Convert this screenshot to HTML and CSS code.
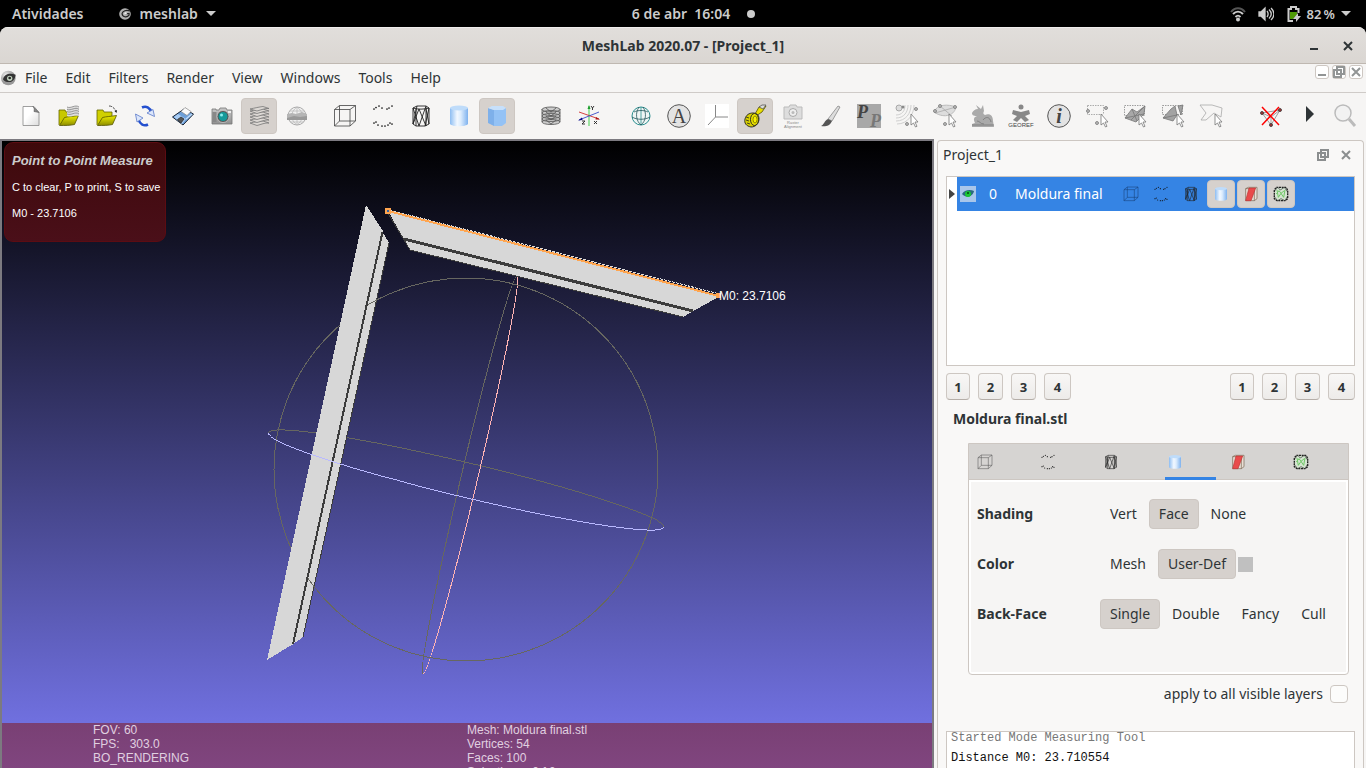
FILE: index.html
```html
<!DOCTYPE html>
<html lang="pt">
<head>
<meta charset="utf-8">
<title>MeshLab 2020.07 - [Project_1]</title>
<link rel="stylesheet" href="styles.css">
</head>
<body>
<svg class="defs" aria-hidden="true">
  <defs>
    <linearGradient id="g-cyl"><stop offset="0" stop-color="#8dbdf2"/><stop offset=".4" stop-color="#f2f8ff"/><stop offset=".6" stop-color="#dcecfd"/><stop offset="1" stop-color="#7fb2ee"/></linearGradient>
    <linearGradient id="g-page" x2="1" y2="1"><stop offset=".4" stop-color="#fff"/><stop offset="1" stop-color="#dcdcdc"/></linearGradient>
    <linearGradient id="g-folder" y2="1" x2="0"><stop offset="0" stop-color="#f0f000"/><stop offset="1" stop-color="#8c8c00"/></linearGradient>
    <linearGradient id="g-cam" y2="1" x2="0"><stop offset="0" stop-color="#c8c8c8"/><stop offset="1" stop-color="#909090"/></linearGradient>
    <radialGradient id="g-ball" cx=".35" cy=".3"><stop offset="0" stop-color="#eee"/><stop offset="1" stop-color="#999"/></radialGradient>
    <symbol id="cursor" viewBox="0 0 24 24"><path d="M16 10v11l2.500-2 2 4 1.500-.700-2-4.300h3z" fill="#fff" stroke="#777" stroke-width=".8"/></symbol>
    <symbol id="logo" viewBox="0 0 24 24"><circle cx="11" cy="12" r="11" fill="url(#g-ball)"/><path d="M3 14c2-8 10-10 19-7-1 8-6 12-12 11-4 0-6-2-7-4z" fill="#333"/><circle cx="13" cy="12.500" r="4" fill="#bfcfbc"/><circle cx="13" cy="12" r="2" fill="#222"/></symbol>
    <symbol id="logo-mono" viewBox="0 0 24 24"><circle cx="12" cy="12" r="10" fill="#b0b0b0"/><path d="M21 7c-7-3-13 0-14 4 0 6 8 8 12 3v-3l-7 1" fill="none" stroke="#222" stroke-width="2"/><circle cx="13" cy="11" r="2" fill="#eee"/></symbol>
    <symbol id="new" viewBox="0 0 24 24"><path d="M4 2.500h11l5 6v13H4z" fill="url(#g-page)" stroke="#888" stroke-width=".8"/><path d="M14 2.500c2 2 1 4 1 5l5 1z" fill="#888" stroke="#555" stroke-width=".6"/></symbol>
    <symbol id="folder-layers" viewBox="0 0 24 24"><path d="M2 21V6h6l1 2h9v4" fill="#c8c800" stroke="#666600" stroke-width=".8"/><path d="M2.500 21.500l5-8c4-1 8-1 14-2l-4 9c-4 1-10 1-15 1z" fill="url(#g-folder)" stroke="#555500" stroke-width=".8"/><path d="M10 3c4 2 8-3 12 0v9c-4-2-8 2-12 0z" fill="#ddd"/><path d="M10 3c4 2 8-3 12 0M10 5.300c4 2 8-3 12 0M10 7.600c4 2 8-3 12 0M10 10c4 2 8-3 12 0" fill="none" stroke="#777" stroke-width=".7"/></symbol>
    <symbol id="folder" viewBox="0 0 24 24"><path d="M2 21V6h6l1 2h8v4" fill="#d0d000" stroke="#666600" stroke-width=".8"/><path d="M2.500 21.500l5-8c4-1 8-1 14-2l-4 9c-4 1-10 1-15 1z" fill="url(#g-folder)" stroke="#555500" stroke-width=".8"/><path d="M14 2c4 0 6 3 7 6" fill="none" stroke="#555" stroke-dasharray="3 1"/><path d="M21.500 9l-2-2 2.500-1z" fill="#222"/></symbol>
    <symbol id="reload" viewBox="0 0 24 24"><path d="M9 3.500c4-2 8 0 9.500 5" fill="none" stroke="#2450cf" stroke-width="2.600"/><path d="M14 9l6-3.500 1.500 7z" fill="#dbe6fb" stroke="#5a78c8" stroke-width=".8"/><path d="M15 20.500c-4 2-8 0-9.500-5" fill="none" stroke="#2450cf" stroke-width="2.600"/><path d="M10 14l-6 4-1.500-8z" fill="#dbe6fb" stroke="#5a78c8" stroke-width=".8"/></symbol>
    <symbol id="save" viewBox="0 0 24 24"><path d="M1.500 13L13 5l9.500 5L12 21z" fill="#6d9fd8" stroke="#1a2433"/><path d="M3 13l4-3 8 5-4 5z" fill="#a9cdf5"/><path d="M10 7.500l4-4 6 4-4 4z" fill="#fafafa" stroke="#888" stroke-width=".7"/><path d="M6.500 15.500l3.500-2.500 3 2-3 4z" fill="#555" stroke="#222" stroke-width=".7"/><path d="M15 15l6-5" stroke="#bfdcfa" stroke-width="1.500"/></symbol>
    <symbol id="camera" viewBox="0 0 24 24"><path d="M3 5h4v1h3l1-2h6l1 2h5v14H3z" fill="url(#g-cam)" stroke="#777" stroke-width=".8"/><path d="M3.500 8h4v10h-4z" fill="#888"/><circle cx="14" cy="12.500" r="6" fill="#555" stroke="#ccc" stroke-width=".8"/><circle cx="14" cy="12.500" r="4.500" fill="#159a9a"/><circle cx="12.500" cy="11" r="1.500" fill="#8ee"/><path d="M19 7h3v2h-3z" fill="#eee"/></symbol>
    <symbol id="layers" viewBox="0 0 24 24"><g fill="#dcd8d4" stroke="#777" stroke-width=".8"><path d="M3 19l7 2.500c4-1 8-3 12-2.500l-6-2c-4 0-8 1-13 2z"/><path d="M3 16l7 2.500c4-1 8-3 12-2.500l-6-2c-4 0-8 1-13 2z"/><path d="M3 13l7 2.500c4-1 8-3 12-2.500l-6-2c-4 0-8 1-13 2z"/><path d="M3 10l7 2.500c4-1 8-3 12-2.500l-6-2c-4 0-8 1-13 2z"/><path d="M3 7l7 2.500c4-1 8-3 12-2.500l-6-2c-4 0-8 1-13 2z"/><path d="M3 5l7 2c4-1 8-3 12-2.500l-6-2C12 3 8 4 3 5z"/></g></symbol>
    <symbol id="raster" viewBox="0 0 24 24"><circle cx="12" cy="12" r="9" fill="#f0f0f0" stroke="#aaa"/><path d="M12 3v18M5 7h14M5 18h14M12 3c-7 5-7 13 0 18c7-5 7-13 0-18" fill="none" stroke="#bbb" stroke-width=".8"/><path d="M2 10l5-1 4 1 6-2 5 2v6H2z" fill="#b5b5b5"/><path d="M2 14l7-2 6 1 7-1v4H2z" fill="#999"/></symbol>
    <symbol id="box" viewBox="0 0 24 24"><path d="M1.500 5.500h15.500V22H1.500zM6.500 1.500h16V17h-16zM1.500 5.500l5-4M17 5.500l5.500-4M17 22l5.500-5M1.500 22l5-5" fill="none" stroke="currentColor" stroke-width=".8"/></symbol>
    <symbol id="points" viewBox="0 0 24 24"><path d="M3 5h0M5 3.500h0M8 2h0M11 4h0M16 5h0M18 4h0M21 2h0M3 19h0M5 18h0M7 21h0M11 22h0M14 22h0M17 21h0M19 19h0M21 20h0" stroke="#111" stroke-width="1.700" stroke-linecap="round"/></symbol>
    <symbol id="wire" viewBox="0 0 24 24"><path d="M4 4l4-2h9l3 2v16l-4 2H7l-3-2zM4 4c4 1.500 12 1.500 16 0M4 20L8 2M4 4l6 18M10 5L4 20M10 5l7 17M17 2l-7 20M17 5l3 15M20 4l-4 18M7 5v17M17 3v19" fill="none" stroke="#222" stroke-width=".9"/></symbol>
    <symbol id="cyl" viewBox="0 0 24 24"><path d="M3 4v16c2 3 16 3 18 0V4z" fill="url(#g-cyl)"/><ellipse cx="12" cy="4" rx="9" ry="2.500" fill="#bfdcfa"/></symbol>
    <symbol id="prism" viewBox="0 0 24 24"><path d="M3 4l6 2v16l-6-3z" fill="#7eb0ea"/><path d="M9 6l12-2v15l-4 3H9z" fill="#94c2f5"/><path d="M3 4l4-2h11l3 2-3 2H9z" fill="#c7e0fb"/></symbol>
    <symbol id="mesh-stack" viewBox="0 0 24 24"><path d="M3 5c4-3 14-3 18 0v13c-4 4-14 4-18 0z" fill="#ccc"/><g fill="none" stroke="#555" stroke-width=".8"><ellipse cx="12" cy="5.500" rx="9" ry="2.500"/><ellipse cx="12" cy="9" rx="9" ry="2.500"/><ellipse cx="12" cy="12" rx="9" ry="2.500"/><ellipse cx="12" cy="15" rx="9" ry="2.500"/><ellipse cx="12" cy="18" rx="9" ry="2.500"/><path d="M3 5v13M21 5v13M7 4l5 4 5-4M7 8l5 4 5-4M7 12l5 4 5-4M7 16l5 4 5-4"/></g></symbol>
    <symbol id="axes" viewBox="0 0 24 24"><path d="M12 2v20" stroke="#7fdc86" stroke-width="1.500"/><path d="M12 1l-1.500 4h3z" fill="#1c9a2c"/><path d="M2 8l20 7" stroke="#d02a2a" stroke-width=".9"/><path d="M2 16l20-8" stroke="#3a48c8" stroke-width=".9"/><path d="M1 16.500l4-3 .500 2.500z" fill="#118"/><path d="M23 15.500l-4-2.500-.500 2.500z" fill="#a11"/><path d="M14 2l1.500 2L17 2m-1.500 2v2M5 17h3l-3 3h3M17 17l3 3m0-3l-3 3" stroke="#222" stroke-width=".9" fill="none"/></symbol>
    <symbol id="trackball" viewBox="0 0 24 24"><circle cx="12" cy="12" r="9" fill="#eef5f4" stroke="#2b8f8f"/><path d="M12 3v18" stroke="#2b8f8f" stroke-width=".8"/><path d="M3 13c5 3 13 3 18 0M5 8c4-2 10-2 14 0M10 3c-4 6-3 14 2 18M14 3c4 6 3 14-2 18" fill="none" stroke="#23565a" stroke-width=".8"/></symbol>
    <symbol id="disc" viewBox="0 0 24 24"><circle cx="12" cy="12" r="11.300" fill="#e3e3e3" stroke="#555"/></symbol>
    <symbol id="corner" viewBox="0 0 24 24"><path d="M0 0h24v24H0z" fill="#fff"/><path d="M10.500 1v12H23M10.500 13L3 21" fill="none" stroke="#888"/></symbol>
    <symbol id="tape" viewBox="0 0 24 24"><path d="M12 10l4-7 7-1-4 6-6 4z" fill="#eadf00" stroke="#554f00" stroke-width=".8"/><path d="M16 3l3-2h4l-3 4z" fill="#ddd" stroke="#555" stroke-width=".8"/><path d="M8 23c-5-1-7-4-6-8 1-4 4-6 8-6 4 0 6 2 6 6 0 5-4 8-8 8z" fill="#d8d000" stroke="#222" stroke-width=".9"/><ellipse cx="11.500" cy="15.500" rx="4" ry="6" fill="#e8e000" stroke="#222" stroke-width=".9"/><ellipse cx="12" cy="15.500" rx="2" ry="3.500" fill="#f8f200" stroke="#665f00" stroke-width=".7"/><path d="M3 13l3 1M3 16l3 1M4 19l3 1" stroke="#222" stroke-width=".8"/></symbol>
    <symbol id="align-cam" viewBox="0 0 24 24"><path d="M3 3h5l1-2h6l1 2h5v12H3z" fill="#ddd" stroke="#bbb"/><circle cx="12" cy="8.500" r="4" fill="#eee" stroke="#aaa"/><circle cx="12" cy="8.500" r="1.500" fill="#bbb"/></symbol>
    <symbol id="brush" viewBox="0 0 24 24"><path d="M9 15L19 2l2 1-8 14z" fill="#ddd" stroke="#888" stroke-width=".8"/><path d="M9 15l4 2c-2 5-7 6-11 5 3-1 3-5 7-7z" fill="#555"/></symbol>
    <symbol id="pp" viewBox="0 0 24 24"><path d="M0 0h24v24H0z" fill="#a8a8a8"/></symbol>
    <symbol id="scan" viewBox="0 0 24 24"><path d="M1 11c6 0 9-4 9-10M1 14c8 0 12-6 12-13M1 17c10 0 15-8 15-16M2 20c11 0 17-10 17-19" fill="none" stroke="#d0d0d0"/><circle cx="4" cy="4" r="3" fill="#ddd" stroke="#999" stroke-width=".8"/><circle cx="8" cy="3" r="1.500" fill="#888"/><g fill="#bbb" stroke="#777" stroke-width=".8"><circle cx="21" cy="5" r="1.500"/><circle cx="12" cy="20" r="1.500"/></g><use href="#cursor"/></symbol>
    <symbol id="plane" viewBox="0 0 24 24"><path d="M1 8c3-8 14-8 22-5-2 10-14 11-22 5z" fill="#ddd" stroke="#bbb"/><path d="M2 9L23 3M7 2l12 10" stroke="#aaa" stroke-width=".8"/><g fill="#bbb" stroke="#777" stroke-width=".8"><circle cx="2" cy="7" r="1.500"/><circle cx="7" cy="2" r="1.500"/><circle cx="22" cy="3" r="1.500"/><circle cx="12" cy="20" r="1.500"/></g><use href="#cursor"/></symbol>
    <symbol id="bunny" viewBox="0 0 24 24"><path d="M1 23v-3l3-1c-2-4-1-6 2-7-4 0-5-1-5-3 1-2 3-4 6-4L5 1l5 4 2-4 1 6c-1 2-1 3 1 4 5-2 8 1 8 6l1 6z" fill="#aaa"/><path d="M12 16c3-4 7-3 8 2M6 17c3 0 3 3 7 3M1 21h22" stroke="#777" fill="none" stroke-width=".8"/></symbol>
    <symbol id="georef" viewBox="0 0 24 24"><circle cx="12" cy="3" r="2.500" fill="#888"/><path d="M4 6l8 2 8-2 1 4-5 2 4 4-4 2-4-4-4 4-4-2 4-4-5-2z" fill="#888"/></symbol>
    <symbol id="sel-vert" viewBox="0 0 24 24"><path d="M2.500 1.500h16v9M2.500 1.500v9h16" fill="none" stroke="#999" stroke-width=".8" stroke-dasharray="1.500 1"/><g fill="#bbb" stroke="#777" stroke-width=".8"><circle cx="3" cy="7" r="1.500"/><circle cx="21" cy="4" r="1.500"/><circle cx="12" cy="19" r="1.500"/></g><use href="#cursor"/></symbol>
    <symbol id="sel-face" viewBox="0 0 24 24"><path d="M1.500 1.500h20v10h-20z" fill="none" stroke="#888" stroke-width=".8" stroke-dasharray="1.500 1"/><path d="M2 14l7-9 5 3 8-6-1 8-8 8z" fill="#a8a8a8" stroke="#777" stroke-width=".8"/><path d="M2 14l19-4M9 5l5 12M22 2L8 16" stroke="#777" stroke-width=".8"/><use href="#cursor"/></symbol>
    <symbol id="sel-conn" viewBox="0 0 24 24"><path d="M1.500 1.500h20v9h-20z" fill="none" stroke="#888" stroke-width=".8" stroke-dasharray="1.500 1"/><path d="M2 14l8-9 4-3 2 9-4 6zM17 2l5-1-2 10z" fill="#a3a3a3" stroke="#777" stroke-width=".8"/><path d="M2 14l14-3" stroke="#777" stroke-width=".8"/><use href="#cursor"/></symbol>
    <symbol id="sel-poly" viewBox="0 0 24 24"><path d="M1 1h12l10 3-1 9-7-4-8 7-5 0 5-7z" fill="none" stroke="#aaa" stroke-width=".8"/><use href="#cursor"/></symbol>
    <symbol id="del-vert" viewBox="0 0 24 24"><path d="M3 9l18-3-9 15zM12 13l9-7M3 9l9 4v8" fill="none" stroke="#888" stroke-width=".8"/><g fill="#a33" stroke="#333" stroke-width=".8"><circle cx="3" cy="9" r="1.500"/><circle cx="21" cy="6" r="1.500"/><circle cx="12" cy="21" r="1.500"/></g><path d="M3 3l17 18M20 3L3 21" stroke="#f00" stroke-width="1.500"/></symbol>
    <symbol id="more" viewBox="0 0 24 24"><path d="M9 2l8 8-8 8z" fill="#2e3436"/></symbol>
    <symbol id="search" viewBox="0 0 24 24"><circle cx="10" cy="9" r="8" fill="#f2f2f2" stroke="#bbb" stroke-width="1.500"/><path d="M16 15l6 7" stroke="#bbb" stroke-width="3"/></symbol>
    <symbol id="redface" viewBox="0 0 24 24"><path d="M4 4h13v18H4zM4 4l4-2h13v17l-4 3" fill="#e8dfd6" stroke="#75604d"/><path d="M9 3h10L12 22H4z" fill="#e94b4b" stroke="#b33"/></symbol>
    <symbol id="greenmesh" viewBox="0 0 24 24"><path d="M5 2h14l3 4v13l-4 3H6l-4-3V6z" fill="#d5e5d1" stroke="#222" stroke-width="2" stroke-dasharray="3 1"/><path d="M2 8l5-6 4 4 6-4 5 7M2 16l5 6 5-3 6 3 4-7" fill="none" stroke="#333"/><path d="M6 6l2 11 4-6 4 6 2-11M5 12l4-5 3 4 5-4" fill="none" stroke="#6fc766" stroke-width="1.500"/></symbol>
    <symbol id="eye" viewBox="0 0 16 16"><path d="M0 0h16v16H0z" fill="#a9c6ea"/><path d="M2 8c2-4 8-5 12-3-1 5-7 8-12 3z" fill="#2a6a80"/><circle cx="8" cy="8" r="3" fill="#19c832"/><circle cx="8" cy="7" r="1" fill="#041"/></symbol>
    <symbol id="restore" viewBox="0 0 12 12"><path d="M4 1h7v7H4zM1 4h7v7H1z" fill="none" stroke="currentColor" stroke-width="2"/></symbol>
    <symbol id="cross" viewBox="0 0 12 12"><path d="M2 2l8 8M10 2l-8 8" stroke="currentColor" stroke-width="2"/></symbol>
    <symbol id="dash" viewBox="0 0 12 12"><path d="M2 9h8" stroke="currentColor" stroke-width="2"/></symbol>
    <symbol id="down" viewBox="0 0 12 12"><path d="M1 3h10L6 8z" fill="currentColor"/></symbol>
  </defs>
</svg>

<header class="topbar">
  <div class="topbar-left">
    <button class="top-item">Atividades</button>
    <button class="top-item"><svg class="i14"><use href="#logo-mono"/></svg>meshlab<svg class="i12"><use href="#down"/></svg></button>
  </div>
  <button class="top-item clock"><span>6 de abr&nbsp; 16:04</span><span class="dot"></span></button>
  <button class="top-item tray">
    <svg class="i16" viewBox="0 0 16 16" fill="none" stroke="#ccc" stroke-width="2"><path d="M1 6c4-5 10-5 14 0" stroke="#555"/><path d="M3 8c3-3 7-3 10 0M5.500 11c2-2 3-2 5 0"/><circle cx="8" cy="13.500" r="1" fill="#ccc"/></svg>
    <svg class="i16" viewBox="0 0 16 16" fill="none" stroke="#ccc" stroke-width="1.300"><path d="M1 6h2l4-4v12l-4-4H1z" fill="#ccc"/><path d="M9 5c1.500 2 1.500 4 0 6M11 3.500c3 3 3 6 0 9M13 2c4 4 4 8 0 12"/></svg>
    <svg class="i16" viewBox="0 0 16 16"><path d="M7 15H2.500V3H5V1h5v2h2.500v4" fill="none" stroke="#ccc" stroke-width="2"/><path d="M4 6h7v3l-4 4H4z" fill="#4e9a06"/><path d="M12 7l-5 6h3v3l5-6h-3z" fill="#ccc"/></svg>
    <span class="pct">82&#8201;%</span>
    <svg class="i12"><use href="#down"/></svg>
  </button>
</header>

<div class="window">
  <div class="titlebar">
    <h1>MeshLab 2020.07 - [Project_1]</h1>
    <div class="wm">
      <button aria-label="Minimize"><svg class="i12"><use href="#dash"/></svg></button>
      <button aria-label="Close"><svg class="i12"><use href="#cross"/></svg></button>
    </div>
  </div>

  <nav class="menubar">
    <svg class="i16"><use href="#logo"/></svg>
    <button>File</button><button>Edit</button><button>Filters</button><button>Render</button><button>View</button><button>Windows</button><button>Tools</button><button>Help</button>
    <div class="mdi">
      <button aria-label="Minimize project"><svg class="i12"><use href="#dash"/></svg></button>
      <button aria-label="Restore project"><svg class="i12"><use href="#restore"/></svg></button>
      <button aria-label="Close project"><svg class="i12"><use href="#cross"/></svg></button>
    </div>
  </nav>

  <div class="toolbar" role="toolbar">
    <div class="group">
      <button aria-label="New project"><svg><use href="#new"/></svg></button>
      <button aria-label="Open project"><svg><use href="#folder-layers"/></svg></button>
      <button aria-label="Import mesh"><svg><use href="#folder"/></svg></button>
      <button aria-label="Reload"><svg><use href="#reload"/></svg></button>
      <button aria-label="Export mesh"><svg><use href="#save"/></svg></button>
      <button aria-label="Snapshot"><svg><use href="#camera"/></svg></button>
      <button aria-label="Layers" class="on"><svg><use href="#layers"/></svg></button>
      <button aria-label="Raster"><svg><use href="#raster"/></svg></button>
    </div>
    <div class="group">
      <button aria-label="Bounding box"><svg><use href="#box"/></svg></button>
      <button aria-label="Points"><svg><use href="#points"/></svg></button>
      <button aria-label="Wireframe"><svg><use href="#wire"/></svg></button>
      <button aria-label="Smooth"><svg><use href="#cyl"/></svg></button>
      <button aria-label="Flat" class="on"><svg><use href="#prism"/></svg></button>
    </div>
    <div class="group g-stack">
      <button aria-label="Layer stack"><svg><use href="#mesh-stack"/></svg></button>
      <button aria-label="Axes"><svg><use href="#axes"/></svg></button>
    </div>
    <div class="group g-edit">
      <button aria-label="Trackball"><svg><use href="#trackball"/></svg></button>
      <button aria-label="Annotation" class="glyph serif"><svg><use href="#disc"/></svg><span>A</span></button>
      <button aria-label="Corner axes"><svg><use href="#corner"/></svg></button>
      <button aria-label="Measuring tool" class="on"><svg><use href="#tape"/></svg></button>
      <button aria-label="Raster alignment" class="glyph align"><svg><use href="#align-cam"/></svg><span>Raster<br>Alignment</span></button>
      <button aria-label="Paint"><svg><use href="#brush"/></svg></button>
      <button aria-label="Pick points" class="glyph pick"><svg><use href="#pp"/></svg><span>P</span><i>P</i></button>
      <button aria-label="Point cloud"><svg><use href="#scan"/></svg></button>
      <button aria-label="Plane"><svg><use href="#plane"/></svg></button>
      <button aria-label="Align"><svg><use href="#bunny"/></svg></button>
      <button aria-label="Georef" class="glyph geo"><svg><use href="#georef"/></svg><span>GEOREF</span></button>
      <button aria-label="Info" class="glyph serif info"><svg><use href="#disc"/></svg><span>i</span></button>
      <button aria-label="Select vertices"><svg><use href="#sel-vert"/></svg></button>
      <button aria-label="Select faces"><svg><use href="#sel-face"/></svg></button>
      <button aria-label="Select connected"><svg><use href="#sel-conn"/></svg></button>
      <button aria-label="Select polygon"><svg><use href="#sel-poly"/></svg></button>
    </div>
    <div class="group g-del">
      <button aria-label="Delete vertices"><svg><use href="#del-vert"/></svg></button>
      <button aria-label="More"><svg><use href="#more"/></svg></button>
      <button aria-label="Search"><svg><use href="#search"/></svg></button>
    </div>
  </div>

  <main class="work">
    <section class="viewport">
      <svg class="scene" viewBox="2 141 930 627" preserveAspectRatio="xMinYMin slice" shape-rendering="crispEdges" fill="none">
        <g stroke="#676760">
          <path transform="translate(466 480) rotate(13.400)" d="M-203.600 0A203.600 17.300 0 0 1 203.600 0"/>
          <path transform="translate(470 475) rotate(13.300)" d="M0-204.500A8.300 204.500 0 0 0 0 204.500"/>
        </g>
        <path transform="translate(470 475) rotate(13.300)" d="M0-204.500A8.300 204.500 0 0 1 0 204.500" stroke="#ffb4b4"/>
        <path d="M382 231L389 243 303 637 292 645z" fill="#d7d7d7"/>
        <path d="M389 243L303 637" stroke="#3c3c3c"/>
        <ellipse cx="466" cy="469.500" rx="192" ry="191.500" stroke="#676760"/>
        <path d="M366 205L383 231 293 644 267 660z" fill="#d7d7d7"/>
        <path d="M382.500 232L293 644" stroke="#3c3c3c" stroke-width="2"/>
        <path d="M388 211L720 296 683 317 410 250z" fill="#d7d7d7"/>
        <path d="M388 213L410 250 683 317" stroke="#3c3c3c"/>
        <path d="M404 239L693 311" stroke="#3c3c3c" stroke-width="3"/>
        <path transform="translate(466 480) rotate(13.400)" d="M-203.600 0A203.600 17.300 0 0 0 203.600 0" stroke="#b9b9ff"/>
        <path d="M389 210L720 294" stroke="#ddd" stroke-dasharray="3 1"/>
        <path d="M388 211L719 296" stroke="#ffa54f" stroke-width="2"/>
        <path d="M385 208h6v6h-6zM716 293h5v5h-5z" fill="#ffa54f"/>
        <path d="M387 210h2v2h-2z" fill="#3465a4"/>
        <text x="719" y="300" class="measure">M0: 23.7106</text>
      </svg>
      <div class="hint">
        <h2>Point to Point Measure</h2>
        <p>C to clear, P to print, S to save</p>
        <p>M0 - 23.7106</p>
      </div>
      <div class="stats">
        <div>FOV: 60<br>FPS: &nbsp; 303.0<br>BO_RENDERING</div>
        <div>Mesh: Moldura final.stl<br>Vertices: 54<br>Faces: 100<br>Selection: v:0 f:0</div>
      </div>
    </section>

    <aside class="dock">
      <div class="dock-head">
        <h2>Project_1</h2>
        <button aria-label="Float"><svg class="i12"><use href="#restore"/></svg></button>
        <button aria-label="Close panel"><svg class="i12"><use href="#cross"/></svg></button>
      </div>
      <div class="tree">
        <div class="row">
          <button class="expander" aria-label="Expand"><svg viewBox="0 0 10 16"><path d="M2 3l6 5-6 5z" fill="#444"/></svg></button>
          <div class="row-body">
            <svg class="i16"><use href="#eye"/></svg>
            <span class="num">0</span>
            <span class="name">Moldura final</span>
            <button aria-label="Box"><svg class="i16"><use href="#box"/></svg></button>
            <button aria-label="Points"><svg class="i16"><use href="#points"/></svg></button>
            <button aria-label="Wire"><svg class="i16"><use href="#wire"/></svg></button>
            <button aria-label="Solid" class="on"><svg class="i16"><use href="#cyl"/></svg></button>
            <button aria-label="Selection" class="on"><svg class="i16"><use href="#redface"/></svg></button>
            <button aria-label="Boundary" class="on"><svg class="i16"><use href="#greenmesh"/></svg></button>
          </div>
        </div>
      </div>
      <div class="presets">
        <div><button>1</button><button>2</button><button>3</button><button>4</button></div>
        <div><button>1</button><button>2</button><button>3</button><button>4</button></div>
      </div>
      <h3>Moldura final.stl</h3>
      <div class="props">
        <div class="tabs" role="tablist">
          <button role="tab" aria-label="Box"><svg class="i16"><use href="#box"/></svg></button>
          <button role="tab" aria-label="Points"><svg class="i16"><use href="#points"/></svg></button>
          <button role="tab" aria-label="Wire"><svg class="i16"><use href="#wire"/></svg></button>
          <button role="tab" aria-label="Solid" aria-selected="true"><svg class="i16"><use href="#cyl"/></svg></button>
          <button role="tab" aria-label="Selection"><svg class="i16"><use href="#redface"/></svg></button>
          <button role="tab" aria-label="Boundary"><svg class="i16"><use href="#greenmesh"/></svg></button>
        </div>
        <div class="page">
          <div class="prop"><strong>Shading</strong><button>Vert</button><button class="on">Face</button><button>None</button></div>
          <div class="prop"><strong>Color</strong><button>Mesh</button><button class="on">User-Def</button><span class="swatch"></span></div>
          <div class="prop"><strong>Back-Face</strong><button class="on">Single</button><button>Double</button><button>Fancy</button><button>Cull</button></div>
        </div>
      </div>
      <label class="apply">apply to all visible layers<input type="checkbox"></label>
      <div class="log"><p class="old">Started Mode Measuring Tool</p><p>Distance M0: 23.710554</p></div>
    </aside>
  </main>
</div>
</body>
</html>
```
FILE: styles.css
```css
* { box-sizing: border-box; }

body {
  margin: 0;
  height: 100vh;
  overflow: hidden;
  display: flex;
  flex-direction: column;
  background: #000;
  color: #2e3436;
  font: 14px/20px "Noto Sans", "Open Sans", sans-serif;
}

h1, h2, h3, p { margin: 0; font-size: inherit; font-weight: inherit; }
button { margin: 0; padding: 0; border: 0; background: none; color: inherit; font: inherit; }
svg { display: block; flex: none; }
.defs { position: absolute; width: 0; height: 0; }
.i12 { width: 12px; height: 12px; }
.i14 { width: 14px; height: 14px; }
.i16 { width: 16px; height: 16px; }

/* desktop bar */
.topbar {
  flex: none;
  height: 27px;
  display: grid;
  grid-template-columns: 1fr auto 1fr;
  align-items: center;
  padding: 0 14px 0 12px;
  color: #ccc;
  font-weight: 600;
}
.topbar-left { display: flex; gap: 35px; }
.top-item { display: flex; align-items: center; gap: 7px; }
.clock { gap: 17px; padding-left: 23px; }
.dot { width: 8px; height: 8px; border-radius: 50%; background: #ccc; }
.tray { justify-self: end; gap: 12px; }
.tray .pct { font-size: 13px; margin: 0 -7px; }

/* window frame */
.window {
  flex: 1;
  min-height: 0;
  display: flex;
  flex-direction: column;
  background: #f6f5f4;
  border-radius: 8px 8px 0 0;
  overflow: hidden;
}
.titlebar {
  flex: none;
  height: 37px;
  display: grid;
  grid-template-columns: 1fr auto 1fr;
  align-items: center;
  background: linear-gradient(#e1dedb, #dad6d2);
  border-top: 1px solid #efedec;
  border-bottom: 1px solid #bfb8b1;
}
.titlebar h1 { grid-column: 2; font-weight: 700; }
.wm { justify-self: end; display: flex; gap: 22px; padding-right: 12px; }

.menubar {
  flex: none;
  height: 29px;
  display: flex;
  align-items: center;
  gap: 18px;
  padding: 0 3px 0 1px;
  border-bottom: 1px solid #cfcbc8;
}
.menubar > svg { margin-right: -10px; }
.mdi { margin-left: auto; align-self: flex-start; display: flex; gap: 3px; color: #929595; }
.mdi button { width: 14px; height: 14px; margin-top: 1px; display: grid; place-items: center; border: 1px solid #cdc7c2; border-radius: 3px; background: #fff; }

.toolbar { flex: none; height: 46px; display: flex; align-items: center; padding-left: 13px; overflow: hidden; }
.group { display: flex; gap: 2px; margin-right: 12px; }
.g-stack { margin-left: 6px; }
.g-edit { margin-left: 4px; }
.g-del { margin-left: 12px; margin-right: 0; }
.g-del button:last-child { width: 32px; }
.group button { width: 36px; height: 36px; display: grid; place-items: center; border: 1px solid transparent; border-radius: 4px; flex: none; color: #444; }
.group svg { width: 24px; height: 24px; }
.group .g-stack svg { width: 22px; }
.group button.on, button.on { background: #d6d1cd; border: 1px solid #cdc7c2; border-radius: 4px; }
.glyph > * { grid-area: 1 / 1; }
.serif span { font: 20px/24px "Liberation Serif", serif; color: #444; }
.info span { font-style: italic; font-weight: 700; }
.pick span, .pick i { font: italic 700 18px/18px "Liberation Serif", serif; color: #444; }
.pick span { justify-self: start; align-self: start; padding: 4px 0 0 5px; }
.pick i { justify-self: end; align-self: end; padding: 0 5px 3px 0; color: #777; }
.group .geo > span, .group .align > span { align-self: end; font: 6px/7px "Liberation Sans", sans-serif; padding-bottom: 4px; }
.group .align > span { font-size: 4px; line-height: 4px; color: #888; }

/* work area */
.work { flex: 1; min-height: 0; display: flex; gap: 3px; padding-right: 2px; }
.viewport {
  flex: 1;
  min-width: 0;
  position: relative;
  border: 2px solid #7c7a80;
  border-bottom: 0;
  background: linear-gradient(#000, #8080ff 665px);
  overflow: hidden;
}
.scene { width: 100%; height: 100%; }
.measure { font: 12px "Liberation Sans", sans-serif; fill: #fff; }
.hint {
  position: absolute;
  top: 1px;
  left: 2px;
  width: 162px;
  height: 100px;
  padding: 10px 7px;
  border: 1px solid #5c0c12;
  border-radius: 9px;
  background: linear-gradient(#3e090b, #4a0f19);
  color: #fff;
  font: 11px/16px "Liberation Sans", sans-serif;
  white-space: nowrap;
}
.hint h2 { font-size: 13px; font-weight: 700; font-style: italic; color: #ccc; }
.hint p { margin-top: 10px; }
.stats {
  position: absolute;
  left: -2px;
  right: -2px;
  bottom: 0;
  height: 45px;
  display: grid;
  grid-template-columns: 374px 1fr;
  padding-left: 93px;
  background: linear-gradient(#794074, #80457f);
  color: #e0d0e0;
  font: 12px/14px "Liberation Sans", sans-serif;
  overflow: hidden;
}

/* project dock */
.dock {
  flex: none;
  width: 427px;
  margin-top: 1px;
  padding: 0 8px;
  display: flex;
  flex-direction: column;
  border: 1px solid #cdc7c2;
  border-bottom: 0;
  border-radius: 4px 4px 0 0;
  background: #f9f8f7;
  overflow: hidden;
}
.dock-head { display: flex; align-items: center; gap: 11px; height: 35px; flex: none; padding: 0 3px 8px 0; color: #8b8e8f; }
.dock-head h2 { margin: 0 auto 0 -3px; color: #2e3436; }
.tree { flex: none; height: 190px; border: 1px solid #cdc7c2; background: #fff; }
.row { display: flex; align-items: center; }
.expander svg { width: 10px; height: 16px; }
.row-body { flex: 1; height: 34px; display: flex; align-items: center; padding-left: 3px; background: #3584e4; color: #fff; }
.row-body > button { width: 28px; height: 28px; margin-right: 2px; display: grid; place-items: center; color: #173f73; }
.num { margin: 0 18px 0 13px; }
.name { width: 102px; white-space: nowrap; }

.presets { flex: none; display: flex; justify-content: space-between; margin-top: 7px; }
.presets div { display: flex; gap: 8px; }
.presets button { width: 25px; height: 27px; border: 1px solid #cdc7c2; border-bottom-color: #b5aea8; border-radius: 4px; background: linear-gradient(#f8f7f6, #edebe9); font-weight: 700; font-size: 13px; }
.presets button:first-child { width: 24px; }
.presets button:last-child { width: 27px; }
.dock h3 { flex: none; margin: 9px 7px 14px; font-weight: 700; }
.props { flex: none; margin: 0 6px 0 22px; border: 1px solid #cdc7c2; border-radius: 0 0 4px 4px; background: #fff; }
.tabs { display: flex; height: 36px; background: #d6d4d2; border-bottom: 1px solid #cdc7c2; }
.tabs button { flex: 1; max-width: 64px; display: flex; align-items: center; padding-left: 8px; position: relative; color: #555; }
.tabs [aria-selected]::after { content: ""; position: absolute; left: 6px; bottom: -1px; width: 51px; height: 3px; background: #3584e4; }
.page { margin: 2px; height: 190px; padding: 17px 6px; display: flex; flex-direction: column; gap: 20px; background: #f6f5f4; }
.prop { display: flex; align-items: center; gap: 2px; }
.prop strong { width: 121px; font-weight: 700; }
.prop button { height: 30px; padding: 0 9px; border: 1px solid transparent; }
.prop button.on { border-color: #cdc7c2; }
.swatch { width: 15px; height: 15px; background: #c0c0c0; }
.apply { flex: none; display: flex; justify-content: flex-end; align-items: center; gap: 7px; margin: 9px 7px 27px; }
.apply input { appearance: none; width: 18px; height: 18px; margin: 0; border: 1px solid #cdc7c2; border-radius: 4px; background: #fcfcfb; }
.log { flex: 1; min-height: 36px; border: 1px solid #cdc7c2; border-bottom: 0; background: #fff; padding: 0 4px; color: #111; font: 12px/20px "Liberation Mono", monospace; overflow: hidden; }
.log .old { margin-top: -4px; color: #777; }
```
